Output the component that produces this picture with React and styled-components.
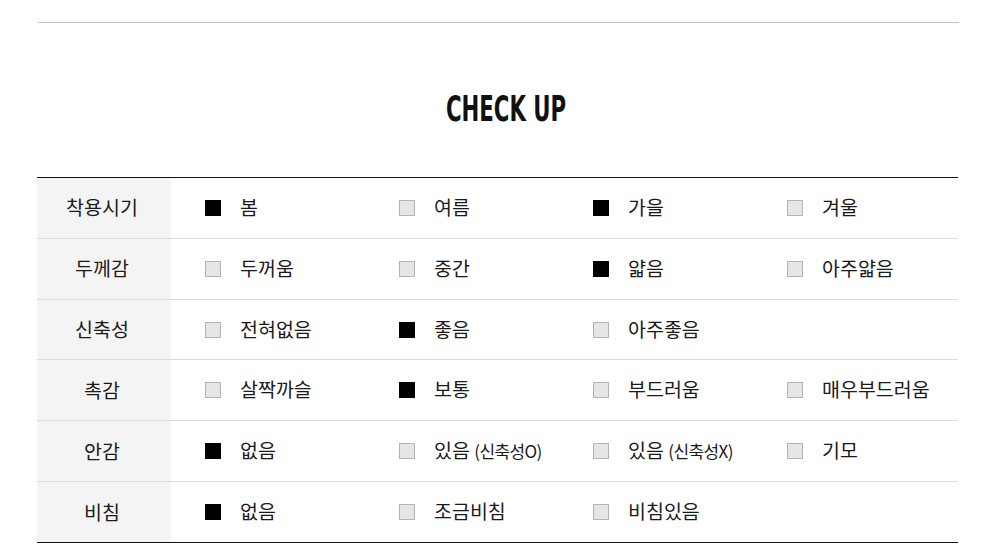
import React from "react";
import styled, { createGlobalStyle } from "styled-components";

const Global = createGlobalStyle`
  html, body { margin: 0; padding: 0; background: #fff; }
  body { font-family: "Noto Sans CJK KR", "Noto Sans", sans-serif; color: #222; }
`;

const Page = styled.div`
  width: 1000px;
  height: 560px;
  padding: 22px 0 0 37px;
  box-sizing: border-box;
  overflow: hidden;
`;

const TopRule = styled.div`
  width: 921px;
  margin-left: 1px;
  border-top: 1px solid #c4c4c4;
`;

const Title = styled.h2`
  margin: 0;
  padding: 66px 0 0 18px;
  height: 154px;
  box-sizing: border-box;
  text-align: center;
  width: 921px;
  font-family: "Liberation Sans Narrow", "DejaVu Sans Condensed", "Liberation Sans", sans-serif;
  font-weight: 700;
  font-size: 35px;
  line-height: 40px;
  color: #111;
`;

const TitleText = styled.span`
  display: inline-block;
  transform: scaleX(0.675);
`;

const Table = styled.div`
  width: 921px;
  border-top: 1px solid #111;
  border-bottom: 1px solid #111;
`;

const Row = styled.div`
  display: flex;
  height: 59.84px;
  border-bottom: ${(p) => (p.$last ? "none" : "1px solid #dcdcdc")};
`;

const Head = styled.div`
  width: 134px;
  flex: none;
  background: #f4f4f4;
  display: flex;
  align-items: center;
  justify-content: center;
  font-size: 19.5px;
  font-weight: 400;
  color: #1a1a1a;
  padding: 0 4px 2px 0;
  box-sizing: border-box;
`;

const Options = styled.div`
  flex: 1;
  display: grid;
  grid-template-columns: repeat(4, 194px);
  padding-left: 34px;
  align-items: center;
`;

const Option = styled.div`
  display: flex;
  align-items: center;
  gap: 19px;
  font-size: 19.5px;
  font-weight: 400;
  color: #1a1a1a;
`;

const Box = styled.span`
  width: 16px;
  height: 16px;
  box-sizing: border-box;
  flex: none;
  background: ${(p) => (p.$on ? "#000" : "#e6e6e6")};
  border: 1px solid ${(p) => (p.$on ? "#000" : "#b4b4b4")};
`;

const LabelText = styled.span`
  line-height: 24px;
  padding-bottom: 2px;
`;

const Small = styled.span`
  font-size: 17px;
  letter-spacing: -0.6px;
`;

const data = [
  ["착용시기", [["봄", 1], ["여름", 0], ["가을", 1], ["겨울", 0]]],
  ["두께감", [["두꺼움", 0], ["중간", 0], ["얇음", 1], ["아주얇음", 0]]],
  ["신축성", [["전혀없음", 0], ["좋음", 1], ["아주좋음", 0]]],
  ["촉감", [["살짝까슬", 0], ["보통", 1], ["부드러움", 0], ["매우부드러움", 0]]],
  ["안감", [["없음", 1], ["있음|(신축성O)", 0], ["있음|(신축성X)", 0], ["기모", 0]]],
  ["비침", [["없음", 1], ["조금비침", 0], ["비침있음", 0]]],
];

function Label({ text }) {
  if (text.includes("|")) {
    const [a, b] = text.split("|");
    return (
      <LabelText>
        {a} <Small>{b}</Small>
      </LabelText>
    );
  }
  return <LabelText>{text}</LabelText>;
}

export default function App() {
  return (
    <Page>
      <Global />
      <TopRule />
      <Title>
        <TitleText>CHECK UP</TitleText>
      </Title>
      <Table>
        {data.map(([head, opts], i) => (
          <Row key={head} $last={i === data.length - 1}>
            <Head>{head}</Head>
            <Options>
              {opts.map(([t, on]) => (
                <Option key={t}>
                  <Box $on={!!on} />
                  <Label text={t} />
                </Option>
              ))}
            </Options>
          </Row>
        ))}
      </Table>
    </Page>
  );
}
